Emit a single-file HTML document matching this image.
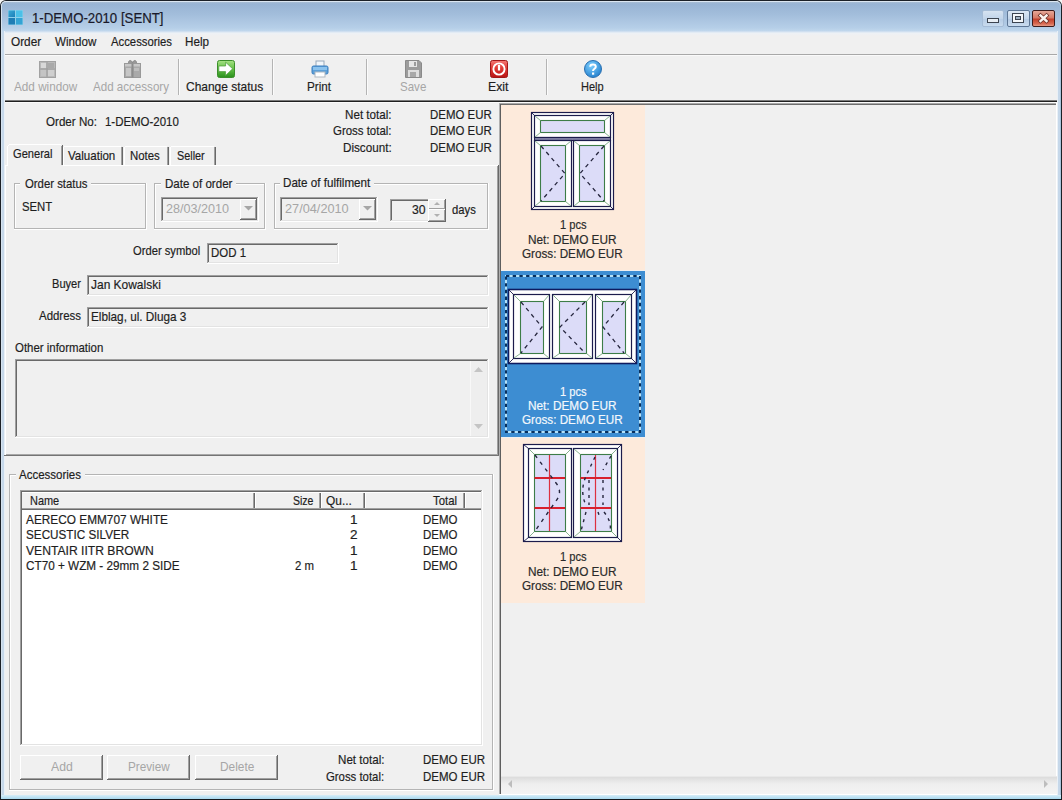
<!DOCTYPE html>
<html><head><meta charset="utf-8">
<style>
*{box-sizing:border-box}
html,body{margin:0;padding:0;width:1062px;height:800px;overflow:hidden;background:#f0f0f0}
body{position:relative;font-family:"Liberation Sans",sans-serif;font-size:12px;color:#000}
.a{position:absolute}
.t{position:absolute;white-space:pre;transform-origin:0 0;-webkit-text-stroke:0.2px currentColor}
svg{position:absolute;overflow:visible}
</style></head><body>
<div class="a" style="left:0px;top:0px;width:1062px;height:800px;background:#f6f6f6;"></div>
<div class="a" style="left:0px;top:0px;width:1062px;height:800px;background:#1b2027;border-radius:6px 6px 0 0;"></div>
<div class="a" style="left:1px;top:1px;width:1060px;height:798px;background:#c6d8ea;border-radius:5px 5px 0 0;"></div>
<div class="a" style="left:1px;top:1px;width:1060px;height:798px;border-radius:5px 5px 0 0;border-top:1px solid #dbe6f1;border-left:1px solid #d6e3ef;border-right:1px solid #aac4dc;"></div>
<div class="a" style="left:2px;top:2px;width:1058px;height:30px;background:linear-gradient(#a7bdd3 0px,#98b4d4 2px,#a2bddb 12px,#b6cfe8 26px,#c4d9ee 30px);border-radius:4px 4px 0 0;"></div>
<div class="a" style="left:1px;top:795px;width:1060px;height:4px;background:linear-gradient(#d8eef8,#a8d8ee);"></div>
<div class="a" style="left:0px;top:799px;width:1062px;height:1px;background:#15191e;"></div>
<div class="a" style="left:5px;top:31px;width:1052px;height:764px;background:#f0f0f0;"></div>
<div class="a" style="left:4px;top:31px;width:1px;height:764px;background:#eaf0f6;"></div>
<div class="a" style="left:1057px;top:31px;width:1px;height:764px;background:#eaf0f6;"></div>
<svg style="left:8px;top:10px" width="15" height="15" viewBox="0 0 15 15">
<defs><linearGradient id="ig" x1="0" y1="0" x2="1" y2="1"><stop offset="0" stop-color="#3aa9d6"/><stop offset="1" stop-color="#1d7fb8"/></linearGradient></defs>
<rect x="0" y="0" width="15" height="15" fill="#8fd0ea"/>
<rect x="0.5" y="0.5" width="6.5" height="6.5" fill="url(#ig)"/><rect x="8" y="0.5" width="6.5" height="6.5" fill="#4cc0e8"/>
<rect x="0.5" y="8" width="6.5" height="6.5" fill="#1f7db5"/><rect x="8" y="8" width="6.5" height="6.5" fill="#34a3d4"/>
</svg>
<div class="t" style="left:31.50px;top:10.95px;font-size:14px;line-height:14px;color:#1a1a2a;transform:scaleX(0.9442);">1-DEMO-2010 [SENT]</div>
<div class="a" style="left:982px;top:10px;width:22px;height:17px;border:1px solid #a5bcd6;border-radius:2px;background:linear-gradient(#d6e3f1,#c2d5ea 50%,#b5cbe4 51%,#c8dbee)"></div>
<div class="a" style="left:987px;top:18px;width:12px;height:5px;border:1px solid #3c4450;background:#e8eef4"></div>
<div class="a" style="left:1007px;top:10px;width:23px;height:17px;border:1px solid #5d7695;border-radius:2px;background:linear-gradient(#dce7f3,#c4d6ea 50%,#b3c9e2 51%,#cadcef)"></div>
<div class="a" style="left:1012px;top:13px;width:12px;height:10px;border:1px solid #3c4450;background:#f4f7fa"></div>
<div class="a" style="left:1015px;top:16px;width:6px;height:4px;border:1px solid #3c4450;background:#9fb0c2"></div>
<div class="a" style="left:1032px;top:10px;width:23px;height:17px;border:1px solid #3e1c1c;border-radius:2px;background:linear-gradient(#e6a797,#d67a66 45%,#c2412d 55%,#d96a52 85%,#e59a85)"></div>
<svg style="left:1037px;top:13px" width="13" height="12" viewBox="0 0 13 12"><path d="M3.5 2.5 L9.5 8 M9.5 2.5 L3.5 8" stroke="#6a3028" stroke-width="4" stroke-linecap="square"/><path d="M3.5 2.5 L9.5 8 M9.5 2.5 L3.5 8" stroke="#fbf3ee" stroke-width="2.4" stroke-linecap="square"/></svg>
<div class="a" style="left:5px;top:31px;width:1052px;height:23px;background:#f0f0f0;"></div>
<div class="a" style="left:5px;top:31px;width:1052px;height:1px;background:#cfdff0;"></div>
<div class="a" style="left:5px;top:32px;width:1052px;height:1px;background:#e2ebf4;"></div>
<div class="a" style="left:5px;top:33px;width:1052px;height:3px;background:linear-gradient(#edf1f6,#f0f0f0);"></div>
<div class="t" style="left:10.50px;top:34.97px;font-size:13.5px;line-height:13.5px;color:#1e1e1e;transform:scaleX(0.8750);">Order</div>
<div class="t" style="left:55.00px;top:34.97px;font-size:13.5px;line-height:13.5px;color:#1e1e1e;transform:scaleX(0.8601);">Window</div>
<div class="t" style="left:110.50px;top:34.97px;font-size:13.5px;line-height:13.5px;color:#1e1e1e;transform:scaleX(0.8381);">Accessories</div>
<div class="t" style="left:184.50px;top:34.97px;font-size:13.5px;line-height:13.5px;color:#1e1e1e;transform:scaleX(0.8644);">Help</div>
<div class="a" style="left:5px;top:54px;width:1052px;height:1px;background:#a8a8a8;"></div>
<div class="a" style="left:5px;top:55px;width:1052px;height:1px;background:#fafafa;"></div>
<div class="a" style="left:5px;top:56px;width:1052px;height:44px;background:#f0f0f0;"></div>
<div class="a" style="left:178px;top:59px;width:1px;height:36px;background:#b4b4b4;"></div>
<div class="a" style="left:179px;top:59px;width:1px;height:36px;background:#fbfbfb;"></div>
<div class="a" style="left:272px;top:59px;width:1px;height:36px;background:#b4b4b4;"></div>
<div class="a" style="left:273px;top:59px;width:1px;height:36px;background:#fbfbfb;"></div>
<div class="a" style="left:366px;top:59px;width:1px;height:36px;background:#b4b4b4;"></div>
<div class="a" style="left:367px;top:59px;width:1px;height:36px;background:#fbfbfb;"></div>
<div class="a" style="left:546px;top:59px;width:1px;height:36px;background:#b4b4b4;"></div>
<div class="a" style="left:547px;top:59px;width:1px;height:36px;background:#fbfbfb;"></div>
<div class="t" style="left:14.10px;top:79.57px;font-size:13.5px;line-height:13.5px;color:#a6a6a6;transform:scaleX(0.8695);-webkit-text-stroke:0;">Add window</div>
<div class="t" style="left:93.00px;top:79.57px;font-size:13.5px;line-height:13.5px;color:#a6a6a6;transform:scaleX(0.8583);-webkit-text-stroke:0;">Add accessory</div>
<div class="t" style="left:186.40px;top:79.57px;font-size:13.5px;line-height:13.5px;color:#1e1e1e;transform:scaleX(0.8867);">Change status</div>
<div class="t" style="left:307.00px;top:79.57px;font-size:13.5px;line-height:13.5px;color:#1e1e1e;transform:scaleX(0.8644);">Print</div>
<div class="t" style="left:399.70px;top:79.57px;font-size:13.5px;line-height:13.5px;color:#a6a6a6;transform:scaleX(0.8544);-webkit-text-stroke:0;">Save</div>
<div class="t" style="left:488.00px;top:79.57px;font-size:13.5px;line-height:13.5px;color:#1e1e1e;transform:scaleX(0.9105);">Exit</div>
<div class="t" style="left:581.40px;top:79.57px;font-size:13.5px;line-height:13.5px;color:#1e1e1e;transform:scaleX(0.8140);">Help</div>
<svg style="left:39px;top:61px" width="17" height="17" viewBox="0 0 17 17">
<rect x="0.5" y="0.5" width="16" height="16" fill="#b9b9b9" stroke="#a2a2a2"/>
<rect x="2" y="2" width="5" height="5" fill="#d8d8d8"/><rect x="9" y="9" width="6" height="6" fill="#cfcfcf"/>
<rect x="2" y="9" width="5" height="6" fill="#c4c4c4"/><rect x="9" y="2" width="6" height="5" fill="#a9a9a9"/>
<path d="M8 1 V16 M1 8 H16" stroke="#9a9a9a"/></svg>
<svg style="left:124px;top:59px" width="17" height="19" viewBox="0 0 17 19">
<path d="M4.5 4.5 C4 0.5 8 0.8 8.5 4 C9 0.8 13 0.5 12.5 4.5" fill="#9a9a9a" stroke="#8a8a8a" stroke-width="1"/>
<rect x="0.5" y="4.5" width="16" height="14" fill="#a9a9a9" stroke="#999"/>
<rect x="1" y="5" width="15" height="2.5" fill="#c8c8c8"/>
<rect x="2" y="9" width="5" height="8" fill="#c6c6c6"/><rect x="10" y="9" width="5" height="3" fill="#bdbdbd"/>
<rect x="7.5" y="4.5" width="2" height="14" fill="#8c8c8c"/></svg>
<svg style="left:217px;top:60px" width="18" height="18" viewBox="0 0 18 18">
<defs><linearGradient id="gg" x1="0" y1="0" x2="0" y2="1"><stop offset="0" stop-color="#a6e184"/><stop offset="0.5" stop-color="#62c046"/><stop offset="1" stop-color="#2a8f1c"/></linearGradient></defs>
<rect x="0.5" y="0.5" width="17" height="17" rx="2" fill="url(#gg)" stroke="#3b8f2a"/>
<path d="M1.8 6 H8.6 V2.2 L15.6 8.8 L8.6 15.4 V11.6 H1.8 Z" fill="#ffffff" stroke="#4a9a38" stroke-width="0.7"/></svg>
<svg style="left:311px;top:60px" width="18" height="18" viewBox="0 0 18 18">
<rect x="5" y="1" width="8" height="6" fill="#f2f6fa" stroke="#9ab"/>
<rect x="1" y="6" width="16" height="8" rx="1.5" fill="#5da0d8" stroke="#3d7fbf"/>
<rect x="2" y="7" width="14" height="3" fill="#8cc3ee"/>
<rect x="4" y="12" width="10" height="5" fill="#ffffff" stroke="#b0b8c0"/></svg>
<svg style="left:405px;top:60px" width="17" height="18" viewBox="0 0 17 18">
<path d="M0.5 0.5 H14 L16.5 3 V17.5 H0.5 Z" fill="#9c9c9c" stroke="#8a8a8a"/>
<rect x="4" y="1" width="8" height="6" fill="#e6e6e6"/><rect x="9" y="2" width="2" height="4" fill="#9c9c9c"/>
<rect x="3" y="10" width="11" height="7" fill="#dedede"/><rect x="5" y="12" width="6" height="5" fill="#a8a8a8"/></svg>
<svg style="left:490px;top:60px" width="18" height="18" viewBox="0 0 18 18">
<defs><linearGradient id="rg" x1="0" y1="0" x2="0" y2="1"><stop offset="0" stop-color="#f47a76"/><stop offset="0.45" stop-color="#e03a34"/><stop offset="1" stop-color="#b81414"/></linearGradient></defs>
<rect x="0.5" y="0.5" width="17" height="17" rx="2" fill="url(#rg)" stroke="#a01818"/>
<circle cx="9" cy="9" r="5.6" fill="none" stroke="#ffffff" stroke-width="1.9"/>
<rect x="7.9" y="5" width="2.2" height="5.5" fill="#ffffff"/></svg>
<svg style="left:584px;top:60px" width="18" height="18" viewBox="0 0 18 18">
<defs><radialGradient id="bg" cx="0.4" cy="0.3" r="0.8"><stop offset="0" stop-color="#7fd0ff"/><stop offset="1" stop-color="#1a78c8"/></radialGradient></defs>
<circle cx="9" cy="9" r="8.5" fill="url(#bg)" stroke="#2a6fb0"/>
<path d="M6.2 6.8 C6.2 3.6 11.8 3.6 11.8 6.8 C11.8 8.8 9 8.8 9 11" fill="none" stroke="#fff" stroke-width="2"/>
<rect x="8" y="12.5" width="2.2" height="2.2" fill="#fff"/></svg>
<div class="a" style="left:5px;top:100px;width:1052px;height:1px;background:#7a7a7a;"></div>
<div class="a" style="left:5px;top:101px;width:1052px;height:1px;background:#1f1f1f;"></div>
<div class="a" style="left:5px;top:102px;width:1052px;height:1px;background:#fbfbfb;"></div>
<div class="t" style="left:46.00px;top:115.07px;font-size:13.5px;line-height:13.5px;color:#1e1e1e;transform:scaleX(0.8603);">Order No:</div>
<div class="t" style="left:105.00px;top:115.07px;font-size:13.5px;line-height:13.5px;color:#1e1e1e;transform:scaleX(0.8478);">1-DEMO-2010</div>
<div class="t" style="left:344.60px;top:108.17px;font-size:13.5px;line-height:13.5px;color:#1e1e1e;transform:scaleX(0.8625);">Net total:</div>
<div class="t" style="left:332.70px;top:124.37px;font-size:13.5px;line-height:13.5px;color:#1e1e1e;transform:scaleX(0.8474);">Gross total:</div>
<div class="t" style="left:342.50px;top:140.97px;font-size:13.5px;line-height:13.5px;color:#1e1e1e;transform:scaleX(0.8653);">Discount:</div>
<div class="t" style="left:429.80px;top:108.17px;font-size:13.5px;line-height:13.5px;color:#1e1e1e;transform:scaleX(0.8479);">DEMO EUR</div>
<div class="t" style="left:429.80px;top:124.37px;font-size:13.5px;line-height:13.5px;color:#1e1e1e;transform:scaleX(0.8479);">DEMO EUR</div>
<div class="t" style="left:429.80px;top:140.97px;font-size:13.5px;line-height:13.5px;color:#1e1e1e;transform:scaleX(0.8479);">DEMO EUR</div>
<div class="a" style="left:5px;top:165px;width:493px;height:1px;background:#ffffff;"></div>
<div class="a" style="left:5px;top:165px;width:1px;height:290px;background:#ffffff;"></div>
<div class="a" style="left:497px;top:166px;width:1px;height:288px;background:#a0a0a0;"></div>
<div class="a" style="left:498px;top:165px;width:1px;height:291px;background:#696969;"></div>
<div class="a" style="left:6px;top:454px;width:492px;height:1px;background:#a8a8a8;"></div>
<div class="a" style="left:4px;top:455px;width:495px;height:1px;background:#747474;"></div>
<div class="a" style="left:63px;top:146px;width:60px;height:19px;background:#f0f0f0;"></div>
<div class="a" style="left:64px;top:146px;width:57px;height:1px;background:#ffffff;"></div>
<div class="a" style="left:63px;top:147px;width:1px;height:18px;background:#ffffff;"></div>
<div class="a" style="left:121px;top:147px;width:1px;height:18px;background:#a0a0a0;"></div>
<div class="a" style="left:122px;top:147px;width:1px;height:18px;background:#696969;"></div>
<div class="a" style="left:124px;top:146px;width:45px;height:19px;background:#f0f0f0;"></div>
<div class="a" style="left:125px;top:146px;width:42px;height:1px;background:#ffffff;"></div>
<div class="a" style="left:124px;top:147px;width:1px;height:18px;background:#ffffff;"></div>
<div class="a" style="left:167px;top:147px;width:1px;height:18px;background:#a0a0a0;"></div>
<div class="a" style="left:168px;top:147px;width:1px;height:18px;background:#696969;"></div>
<div class="a" style="left:170px;top:146px;width:46px;height:19px;background:#f0f0f0;"></div>
<div class="a" style="left:171px;top:146px;width:43px;height:1px;background:#ffffff;"></div>
<div class="a" style="left:170px;top:147px;width:1px;height:18px;background:#ffffff;"></div>
<div class="a" style="left:214px;top:147px;width:1px;height:18px;background:#a0a0a0;"></div>
<div class="a" style="left:215px;top:147px;width:1px;height:18px;background:#696969;"></div>
<div class="a" style="left:7px;top:144px;width:56px;height:22px;background:#f0f0f0;"></div>
<div class="a" style="left:9px;top:144px;width:52px;height:1px;background:#ffffff;"></div>
<div class="a" style="left:7px;top:146px;width:1px;height:20px;background:#ffffff;"></div>
<div class="a" style="left:8px;top:145px;width:1px;height:1px;background:#ffffff;"></div>
<div class="a" style="left:61px;top:146px;width:1px;height:19px;background:#a0a0a0;"></div>
<div class="a" style="left:62px;top:145px;width:1px;height:20px;background:#696969;"></div>
<div class="t" style="left:13.20px;top:146.97px;font-size:13.5px;line-height:13.5px;color:#1e1e1e;transform:scaleX(0.8224);">General</div>
<div class="t" style="left:67.70px;top:149.27px;font-size:13.5px;line-height:13.5px;color:#1e1e1e;transform:scaleX(0.8554);">Valuation</div>
<div class="t" style="left:129.80px;top:149.27px;font-size:13.5px;line-height:13.5px;color:#1e1e1e;transform:scaleX(0.8446);">Notes</div>
<div class="t" style="left:176.50px;top:149.27px;font-size:13.5px;line-height:13.5px;color:#1e1e1e;transform:scaleX(0.8025);">Seller</div>
<div class="a" style="left:14px;top:183px;width:132px;height:1px;background:#b4b4b4;"></div>
<div class="a" style="left:15px;top:184px;width:131px;height:1px;background:#ffffff;"></div>
<div class="a" style="left:14px;top:183px;width:1px;height:46px;background:#b4b4b4;"></div>
<div class="a" style="left:15px;top:184px;width:1px;height:45px;background:#ffffff;"></div>
<div class="a" style="left:145px;top:183px;width:1px;height:46px;background:#b4b4b4;"></div>
<div class="a" style="left:146px;top:183px;width:1px;height:47px;background:#ffffff;"></div>
<div class="a" style="left:14px;top:228px;width:132px;height:1px;background:#b4b4b4;"></div>
<div class="a" style="left:14px;top:229px;width:133px;height:1px;background:#ffffff;"></div>
<div class="a" style="left:20px;top:182px;width:71px;height:4px;background:#f0f0f0;"></div>
<div class="t" style="left:24.80px;top:176.77px;font-size:13.5px;line-height:13.5px;color:#1e1e1e;transform:scaleX(0.8414);">Order status</div>
<div class="t" style="left:21.80px;top:199.77px;font-size:13.5px;line-height:13.5px;color:#1e1e1e;transform:scaleX(0.8385);">SENT</div>
<div class="a" style="left:154px;top:183px;width:111px;height:1px;background:#b4b4b4;"></div>
<div class="a" style="left:155px;top:184px;width:110px;height:1px;background:#ffffff;"></div>
<div class="a" style="left:154px;top:183px;width:1px;height:46px;background:#b4b4b4;"></div>
<div class="a" style="left:155px;top:184px;width:1px;height:45px;background:#ffffff;"></div>
<div class="a" style="left:264px;top:183px;width:1px;height:46px;background:#b4b4b4;"></div>
<div class="a" style="left:265px;top:183px;width:1px;height:47px;background:#ffffff;"></div>
<div class="a" style="left:154px;top:228px;width:111px;height:1px;background:#b4b4b4;"></div>
<div class="a" style="left:154px;top:229px;width:112px;height:1px;background:#ffffff;"></div>
<div class="a" style="left:161px;top:182px;width:75px;height:4px;background:#f0f0f0;"></div>
<div class="t" style="left:164.60px;top:176.77px;font-size:13.5px;line-height:13.5px;color:#1e1e1e;transform:scaleX(0.8554);">Date of order</div>
<div class="a" style="left:161px;top:197px;width:98px;height:25px;background:#f0f0f0;"></div>
<div class="a" style="left:161px;top:197px;width:98px;height:1px;background:#a0a0a0;"></div>
<div class="a" style="left:161px;top:197px;width:1px;height:25px;background:#a0a0a0;"></div>
<div class="a" style="left:162px;top:198px;width:96px;height:1px;background:#696969;"></div>
<div class="a" style="left:162px;top:198px;width:1px;height:23px;background:#696969;"></div>
<div class="a" style="left:161px;top:221px;width:98px;height:1px;background:#ffffff;"></div>
<div class="a" style="left:258px;top:197px;width:1px;height:25px;background:#ffffff;"></div>
<div class="a" style="left:162px;top:220px;width:96px;height:1px;background:#e3e3e3;"></div>
<div class="a" style="left:257px;top:198px;width:1px;height:23px;background:#e3e3e3;"></div>
<div class="a" style="left:240px;top:199px;width:17px;height:21px;background:#f0f0f0;"></div>
<div class="a" style="left:240px;top:199px;width:17px;height:1px;background:#ffffff;"></div>
<div class="a" style="left:240px;top:199px;width:1px;height:21px;background:#ffffff;"></div>
<div class="a" style="left:240px;top:219px;width:17px;height:1px;background:#696969;"></div>
<div class="a" style="left:256px;top:199px;width:1px;height:21px;background:#696969;"></div>
<div class="a" style="left:241px;top:218px;width:15px;height:1px;background:#a0a0a0;"></div>
<div class="a" style="left:255px;top:200px;width:1px;height:19px;background:#a0a0a0;"></div>
<svg style="left:244px;top:206px" width="9" height="5"><path d="M0 0 H9 L4.5 4.5 Z" fill="#a6a6a6"/></svg>
<div class="t" style="left:166.00px;top:202.17px;font-size:13.5px;line-height:13.5px;color:#a6a6a6;transform:scaleX(0.9323);-webkit-text-stroke:0;">28/03/2010</div>
<div class="a" style="left:274px;top:183px;width:214px;height:1px;background:#b4b4b4;"></div>
<div class="a" style="left:275px;top:184px;width:213px;height:1px;background:#ffffff;"></div>
<div class="a" style="left:274px;top:183px;width:1px;height:46px;background:#b4b4b4;"></div>
<div class="a" style="left:275px;top:184px;width:1px;height:45px;background:#ffffff;"></div>
<div class="a" style="left:487px;top:183px;width:1px;height:46px;background:#b4b4b4;"></div>
<div class="a" style="left:488px;top:183px;width:1px;height:47px;background:#ffffff;"></div>
<div class="a" style="left:274px;top:228px;width:214px;height:1px;background:#b4b4b4;"></div>
<div class="a" style="left:274px;top:229px;width:215px;height:1px;background:#ffffff;"></div>
<div class="a" style="left:280px;top:182px;width:94px;height:4px;background:#f0f0f0;"></div>
<div class="t" style="left:283.40px;top:176.27px;font-size:13.5px;line-height:13.5px;color:#1e1e1e;transform:scaleX(0.8618);">Date of fulfilment</div>
<div class="a" style="left:280px;top:197px;width:98px;height:25px;background:#f0f0f0;"></div>
<div class="a" style="left:280px;top:197px;width:98px;height:1px;background:#a0a0a0;"></div>
<div class="a" style="left:280px;top:197px;width:1px;height:25px;background:#a0a0a0;"></div>
<div class="a" style="left:281px;top:198px;width:96px;height:1px;background:#696969;"></div>
<div class="a" style="left:281px;top:198px;width:1px;height:23px;background:#696969;"></div>
<div class="a" style="left:280px;top:221px;width:98px;height:1px;background:#ffffff;"></div>
<div class="a" style="left:377px;top:197px;width:1px;height:25px;background:#ffffff;"></div>
<div class="a" style="left:281px;top:220px;width:96px;height:1px;background:#e3e3e3;"></div>
<div class="a" style="left:376px;top:198px;width:1px;height:23px;background:#e3e3e3;"></div>
<div class="a" style="left:359px;top:199px;width:17px;height:21px;background:#f0f0f0;"></div>
<div class="a" style="left:359px;top:199px;width:17px;height:1px;background:#ffffff;"></div>
<div class="a" style="left:359px;top:199px;width:1px;height:21px;background:#ffffff;"></div>
<div class="a" style="left:359px;top:219px;width:17px;height:1px;background:#696969;"></div>
<div class="a" style="left:375px;top:199px;width:1px;height:21px;background:#696969;"></div>
<div class="a" style="left:360px;top:218px;width:15px;height:1px;background:#a0a0a0;"></div>
<div class="a" style="left:374px;top:200px;width:1px;height:19px;background:#a0a0a0;"></div>
<svg style="left:363px;top:206px" width="9" height="5"><path d="M0 0 H9 L4.5 4.5 Z" fill="#a6a6a6"/></svg>
<div class="t" style="left:284.70px;top:202.17px;font-size:13.5px;line-height:13.5px;color:#a6a6a6;transform:scaleX(0.9426);-webkit-text-stroke:0;">27/04/2010</div>
<div class="a" style="left:390px;top:199px;width:41px;height:23px;background:#f0f0f0;"></div>
<div class="a" style="left:390px;top:199px;width:41px;height:1px;background:#a0a0a0;"></div>
<div class="a" style="left:390px;top:199px;width:1px;height:23px;background:#a0a0a0;"></div>
<div class="a" style="left:391px;top:200px;width:39px;height:1px;background:#696969;"></div>
<div class="a" style="left:391px;top:200px;width:1px;height:21px;background:#696969;"></div>
<div class="a" style="left:390px;top:221px;width:41px;height:1px;background:#ffffff;"></div>
<div class="a" style="left:430px;top:199px;width:1px;height:23px;background:#ffffff;"></div>
<div class="a" style="left:391px;top:220px;width:39px;height:1px;background:#e3e3e3;"></div>
<div class="a" style="left:429px;top:200px;width:1px;height:21px;background:#e3e3e3;"></div>
<div class="a" style="left:428px;top:199px;width:18px;height:11px;background:#f0f0f0;"></div>
<div class="a" style="left:428px;top:199px;width:18px;height:1px;background:#ffffff;"></div>
<div class="a" style="left:428px;top:199px;width:1px;height:11px;background:#ffffff;"></div>
<div class="a" style="left:428px;top:209px;width:18px;height:1px;background:#696969;"></div>
<div class="a" style="left:445px;top:199px;width:1px;height:11px;background:#696969;"></div>
<div class="a" style="left:429px;top:208px;width:16px;height:1px;background:#a0a0a0;"></div>
<div class="a" style="left:444px;top:200px;width:1px;height:9px;background:#a0a0a0;"></div>
<div class="a" style="left:428px;top:209px;width:18px;height:13px;background:#f0f0f0;"></div>
<div class="a" style="left:428px;top:209px;width:18px;height:1px;background:#ffffff;"></div>
<div class="a" style="left:428px;top:209px;width:1px;height:13px;background:#ffffff;"></div>
<div class="a" style="left:428px;top:221px;width:18px;height:1px;background:#696969;"></div>
<div class="a" style="left:445px;top:209px;width:1px;height:13px;background:#696969;"></div>
<div class="a" style="left:429px;top:220px;width:16px;height:1px;background:#a0a0a0;"></div>
<div class="a" style="left:444px;top:210px;width:1px;height:11px;background:#a0a0a0;"></div>
<svg style="left:434px;top:202px" width="6" height="3"><path d="M0 3 H6 L3 0 Z" fill="#b0b0b0"/></svg>
<svg style="left:434px;top:214px" width="6" height="3"><path d="M0 0 H6 L3 3 Z" fill="#b0b0b0"/></svg>
<div class="t" style="left:411.90px;top:203.17px;font-size:13.5px;line-height:13.5px;color:#1e1e1e;transform:scaleX(0.9048);">30</div>
<div class="t" style="left:452.00px;top:203.17px;font-size:13.5px;line-height:13.5px;color:#1e1e1e;transform:scaleX(0.8342);">days</div>
<div class="t" style="left:133.40px;top:244.37px;font-size:13.5px;line-height:13.5px;color:#1e1e1e;transform:scaleX(0.8293);">Order symbol</div>
<div class="a" style="left:207px;top:243px;width:132px;height:21px;background:#f0f0f0;"></div>
<div class="a" style="left:207px;top:243px;width:132px;height:1px;background:#a0a0a0;"></div>
<div class="a" style="left:207px;top:243px;width:1px;height:21px;background:#a0a0a0;"></div>
<div class="a" style="left:208px;top:244px;width:130px;height:1px;background:#696969;"></div>
<div class="a" style="left:208px;top:244px;width:1px;height:19px;background:#696969;"></div>
<div class="a" style="left:207px;top:263px;width:132px;height:1px;background:#ffffff;"></div>
<div class="a" style="left:338px;top:243px;width:1px;height:21px;background:#ffffff;"></div>
<div class="a" style="left:208px;top:262px;width:130px;height:1px;background:#e3e3e3;"></div>
<div class="a" style="left:337px;top:244px;width:1px;height:19px;background:#e3e3e3;"></div>
<div class="t" style="left:210.50px;top:246.47px;font-size:13.5px;line-height:13.5px;color:#1e1e1e;transform:scaleX(0.8482);">DOD 1</div>
<div class="t" style="left:51.60px;top:277.37px;font-size:13.5px;line-height:13.5px;color:#1e1e1e;transform:scaleX(0.8220);">Buyer</div>
<div class="a" style="left:87px;top:275px;width:402px;height:21px;background:#f0f0f0;"></div>
<div class="a" style="left:87px;top:275px;width:402px;height:1px;background:#a0a0a0;"></div>
<div class="a" style="left:87px;top:275px;width:1px;height:21px;background:#a0a0a0;"></div>
<div class="a" style="left:88px;top:276px;width:400px;height:1px;background:#696969;"></div>
<div class="a" style="left:88px;top:276px;width:1px;height:19px;background:#696969;"></div>
<div class="a" style="left:87px;top:295px;width:402px;height:1px;background:#ffffff;"></div>
<div class="a" style="left:488px;top:275px;width:1px;height:21px;background:#ffffff;"></div>
<div class="a" style="left:88px;top:294px;width:400px;height:1px;background:#e3e3e3;"></div>
<div class="a" style="left:487px;top:276px;width:1px;height:19px;background:#e3e3e3;"></div>
<div class="t" style="left:90.50px;top:278.47px;font-size:13.5px;line-height:13.5px;color:#1e1e1e;transform:scaleX(0.8858);">Jan Kowalski</div>
<div class="t" style="left:38.60px;top:309.37px;font-size:13.5px;line-height:13.5px;color:#1e1e1e;transform:scaleX(0.8479);">Address</div>
<div class="a" style="left:87px;top:307px;width:402px;height:21px;background:#f0f0f0;"></div>
<div class="a" style="left:87px;top:307px;width:402px;height:1px;background:#a0a0a0;"></div>
<div class="a" style="left:87px;top:307px;width:1px;height:21px;background:#a0a0a0;"></div>
<div class="a" style="left:88px;top:308px;width:400px;height:1px;background:#696969;"></div>
<div class="a" style="left:88px;top:308px;width:1px;height:19px;background:#696969;"></div>
<div class="a" style="left:87px;top:327px;width:402px;height:1px;background:#ffffff;"></div>
<div class="a" style="left:488px;top:307px;width:1px;height:21px;background:#ffffff;"></div>
<div class="a" style="left:88px;top:326px;width:400px;height:1px;background:#e3e3e3;"></div>
<div class="a" style="left:487px;top:308px;width:1px;height:19px;background:#e3e3e3;"></div>
<div class="t" style="left:91.00px;top:310.47px;font-size:13.5px;line-height:13.5px;color:#1e1e1e;transform:scaleX(0.8697);">Elblag, ul. Dluga 3</div>
<div class="t" style="left:15.20px;top:341.27px;font-size:13.5px;line-height:13.5px;color:#1e1e1e;transform:scaleX(0.8466);">Other information</div>
<div class="a" style="left:15px;top:359px;width:474px;height:79px;background:#f0f0f0;"></div>
<div class="a" style="left:15px;top:359px;width:474px;height:1px;background:#a0a0a0;"></div>
<div class="a" style="left:15px;top:359px;width:1px;height:79px;background:#a0a0a0;"></div>
<div class="a" style="left:16px;top:360px;width:472px;height:1px;background:#696969;"></div>
<div class="a" style="left:16px;top:360px;width:1px;height:77px;background:#696969;"></div>
<div class="a" style="left:15px;top:437px;width:474px;height:1px;background:#ffffff;"></div>
<div class="a" style="left:488px;top:359px;width:1px;height:79px;background:#ffffff;"></div>
<div class="a" style="left:16px;top:436px;width:472px;height:1px;background:#e3e3e3;"></div>
<div class="a" style="left:487px;top:360px;width:1px;height:77px;background:#e3e3e3;"></div>
<div class="a" style="left:470px;top:361px;width:17px;height:75px;background:#eeeeee;"></div>
<div class="a" style="left:470px;top:361px;width:1px;height:75px;background:#f8f8f8;"></div>
<svg style="left:474px;top:367px" width="9" height="5"><path d="M0 5 H9 L4.5 0 Z" fill="#c4c4c4"/></svg>
<svg style="left:474px;top:424px" width="9" height="5"><path d="M0 0 H9 L4.5 5 Z" fill="#c4c4c4"/></svg>
<div class="a" style="left:9px;top:474px;width:484px;height:1px;background:#b4b4b4;"></div>
<div class="a" style="left:10px;top:475px;width:483px;height:1px;background:#ffffff;"></div>
<div class="a" style="left:9px;top:474px;width:1px;height:316px;background:#b4b4b4;"></div>
<div class="a" style="left:10px;top:475px;width:1px;height:315px;background:#ffffff;"></div>
<div class="a" style="left:492px;top:474px;width:1px;height:316px;background:#b4b4b4;"></div>
<div class="a" style="left:493px;top:474px;width:1px;height:317px;background:#ffffff;"></div>
<div class="a" style="left:9px;top:789px;width:484px;height:1px;background:#b4b4b4;"></div>
<div class="a" style="left:9px;top:790px;width:485px;height:1px;background:#ffffff;"></div>
<div class="a" style="left:16px;top:473px;width:69px;height:4px;background:#f0f0f0;"></div>
<div class="t" style="left:19.00px;top:467.77px;font-size:13.5px;line-height:13.5px;color:#1e1e1e;transform:scaleX(0.8519);">Accessories</div>
<div class="a" style="left:20px;top:490px;width:463px;height:256px;background:#ffffff;"></div>
<div class="a" style="left:20px;top:490px;width:463px;height:1px;background:#a0a0a0;"></div>
<div class="a" style="left:20px;top:490px;width:1px;height:256px;background:#a0a0a0;"></div>
<div class="a" style="left:21px;top:491px;width:461px;height:1px;background:#696969;"></div>
<div class="a" style="left:21px;top:491px;width:1px;height:254px;background:#696969;"></div>
<div class="a" style="left:20px;top:745px;width:463px;height:1px;background:#ffffff;"></div>
<div class="a" style="left:482px;top:490px;width:1px;height:256px;background:#ffffff;"></div>
<div class="a" style="left:21px;top:744px;width:461px;height:1px;background:#e3e3e3;"></div>
<div class="a" style="left:481px;top:491px;width:1px;height:254px;background:#e3e3e3;"></div>
<div class="a" style="left:22px;top:492px;width:459px;height:17px;background:#f0f0f0;"></div>
<div class="a" style="left:22px;top:492px;width:459px;height:1px;background:#ffffff;"></div>
<div class="a" style="left:22px;top:508px;width:459px;height:1px;background:#a0a0a0;"></div>
<div class="a" style="left:22px;top:509px;width:459px;height:1px;background:#6a6a6a;"></div>
<div class="a" style="left:253px;top:493px;width:1px;height:15px;background:#a0a0a0;"></div>
<div class="a" style="left:254px;top:493px;width:1px;height:15px;background:#6a6a6a;"></div>
<div class="a" style="left:255px;top:493px;width:1px;height:15px;background:#ffffff;"></div>
<div class="a" style="left:319px;top:493px;width:1px;height:15px;background:#a0a0a0;"></div>
<div class="a" style="left:320px;top:493px;width:1px;height:15px;background:#6a6a6a;"></div>
<div class="a" style="left:321px;top:493px;width:1px;height:15px;background:#ffffff;"></div>
<div class="a" style="left:363px;top:493px;width:1px;height:15px;background:#a0a0a0;"></div>
<div class="a" style="left:364px;top:493px;width:1px;height:15px;background:#6a6a6a;"></div>
<div class="a" style="left:365px;top:493px;width:1px;height:15px;background:#ffffff;"></div>
<div class="a" style="left:463px;top:493px;width:1px;height:15px;background:#a0a0a0;"></div>
<div class="a" style="left:464px;top:493px;width:1px;height:15px;background:#6a6a6a;"></div>
<div class="a" style="left:465px;top:493px;width:1px;height:15px;background:#ffffff;"></div>
<div class="t" style="left:29.60px;top:493.87px;font-size:13.5px;line-height:13.5px;color:#1e1e1e;transform:scaleX(0.8108);">Name</div>
<div class="t" style="left:292.60px;top:493.87px;font-size:13.5px;line-height:13.5px;color:#1e1e1e;transform:scaleX(0.7767);">Size</div>
<div class="t" style="left:326.20px;top:493.87px;font-size:13.5px;line-height:13.5px;color:#1e1e1e;transform:scaleX(0.8816);">Qu...</div>
<div class="t" style="left:433.40px;top:493.87px;font-size:13.5px;line-height:13.5px;color:#1e1e1e;transform:scaleX(0.8412);">Total</div>
<div class="t" style="left:26.40px;top:513.07px;font-size:13.5px;line-height:13.5px;color:#1e1e1e;transform:scaleX(0.8764);">AERECO EMM707 WHITE</div>
<div class="t" style="left:349.98px;top:513.07px;font-size:13.5px;line-height:13.5px;color:#1e1e1e;">1</div>
<div class="t" style="left:423.00px;top:513.07px;font-size:13.5px;line-height:13.5px;color:#1e1e1e;transform:scaleX(0.8494);">DEMO</div>
<div class="t" style="left:26.40px;top:528.44px;font-size:13.5px;line-height:13.5px;color:#1e1e1e;transform:scaleX(0.8678);">SECUSTIC SILVER</div>
<div class="t" style="left:349.98px;top:528.44px;font-size:13.5px;line-height:13.5px;color:#1e1e1e;">2</div>
<div class="t" style="left:423.00px;top:528.44px;font-size:13.5px;line-height:13.5px;color:#1e1e1e;transform:scaleX(0.8494);">DEMO</div>
<div class="t" style="left:26.40px;top:543.81px;font-size:13.5px;line-height:13.5px;color:#1e1e1e;transform:scaleX(0.8983);">VENTAIR IITR BROWN</div>
<div class="t" style="left:349.98px;top:543.81px;font-size:13.5px;line-height:13.5px;color:#1e1e1e;">1</div>
<div class="t" style="left:423.00px;top:543.81px;font-size:13.5px;line-height:13.5px;color:#1e1e1e;transform:scaleX(0.8494);">DEMO</div>
<div class="t" style="left:26.40px;top:559.18px;font-size:13.5px;line-height:13.5px;color:#1e1e1e;transform:scaleX(0.8695);">CT70 + WZM - 29mm 2 SIDE</div>
<div class="t" style="left:294.70px;top:559.18px;font-size:13.5px;line-height:13.5px;color:#1e1e1e;transform:scaleX(0.8439);">2 m</div>
<div class="t" style="left:349.98px;top:559.18px;font-size:13.5px;line-height:13.5px;color:#1e1e1e;">1</div>
<div class="t" style="left:423.00px;top:559.18px;font-size:13.5px;line-height:13.5px;color:#1e1e1e;transform:scaleX(0.8494);">DEMO</div>
<div class="a" style="left:20px;top:755px;width:83px;height:25px;background:#f0f0f0;"></div>
<div class="a" style="left:20px;top:755px;width:83px;height:1px;background:#ffffff;"></div>
<div class="a" style="left:20px;top:755px;width:1px;height:25px;background:#ffffff;"></div>
<div class="a" style="left:20px;top:779px;width:83px;height:1px;background:#696969;"></div>
<div class="a" style="left:102px;top:755px;width:1px;height:25px;background:#696969;"></div>
<div class="a" style="left:21px;top:778px;width:81px;height:1px;background:#a0a0a0;"></div>
<div class="a" style="left:101px;top:756px;width:1px;height:23px;background:#a0a0a0;"></div>
<div class="a" style="left:107px;top:755px;width:83px;height:25px;background:#f0f0f0;"></div>
<div class="a" style="left:107px;top:755px;width:83px;height:1px;background:#ffffff;"></div>
<div class="a" style="left:107px;top:755px;width:1px;height:25px;background:#ffffff;"></div>
<div class="a" style="left:107px;top:779px;width:83px;height:1px;background:#696969;"></div>
<div class="a" style="left:189px;top:755px;width:1px;height:25px;background:#696969;"></div>
<div class="a" style="left:108px;top:778px;width:81px;height:1px;background:#a0a0a0;"></div>
<div class="a" style="left:188px;top:756px;width:1px;height:23px;background:#a0a0a0;"></div>
<div class="a" style="left:195px;top:755px;width:83px;height:25px;background:#f0f0f0;"></div>
<div class="a" style="left:195px;top:755px;width:83px;height:1px;background:#ffffff;"></div>
<div class="a" style="left:195px;top:755px;width:1px;height:25px;background:#ffffff;"></div>
<div class="a" style="left:195px;top:779px;width:83px;height:1px;background:#696969;"></div>
<div class="a" style="left:277px;top:755px;width:1px;height:25px;background:#696969;"></div>
<div class="a" style="left:196px;top:778px;width:81px;height:1px;background:#a0a0a0;"></div>
<div class="a" style="left:276px;top:756px;width:1px;height:23px;background:#a0a0a0;"></div>
<div class="t" style="left:50.90px;top:760.17px;font-size:13.5px;line-height:13.5px;color:#a6a6a6;transform:scaleX(0.9072);-webkit-text-stroke:0;">Add</div>
<div class="t" style="left:127.80px;top:760.17px;font-size:13.5px;line-height:13.5px;color:#a6a6a6;transform:scaleX(0.8685);-webkit-text-stroke:0;">Preview</div>
<div class="t" style="left:219.60px;top:760.17px;font-size:13.5px;line-height:13.5px;color:#a6a6a6;transform:scaleX(0.8788);-webkit-text-stroke:0;">Delete</div>
<div class="t" style="left:337.70px;top:753.07px;font-size:13.5px;line-height:13.5px;color:#1e1e1e;transform:scaleX(0.8606);">Net total:</div>
<div class="t" style="left:326.10px;top:769.57px;font-size:13.5px;line-height:13.5px;color:#1e1e1e;transform:scaleX(0.8416);">Gross total:</div>
<div class="t" style="left:423.00px;top:753.07px;font-size:13.5px;line-height:13.5px;color:#1e1e1e;transform:scaleX(0.8521);">DEMO EUR</div>
<div class="t" style="left:423.00px;top:769.57px;font-size:13.5px;line-height:13.5px;color:#1e1e1e;transform:scaleX(0.8521);">DEMO EUR</div>
<div class="a" style="left:499px;top:103px;width:558px;height:692px;background:#f0f0f0;"></div>
<div class="a" style="left:499px;top:103px;width:558px;height:1px;background:#a8a8a8;"></div>
<div class="a" style="left:499px;top:103px;width:1px;height:692px;background:#b0b0b0;"></div>
<div class="a" style="left:500px;top:104px;width:557px;height:1px;background:#6e6e6e;"></div>
<div class="a" style="left:500px;top:104px;width:1px;height:690px;background:#5e5e5e;"></div>
<div class="a" style="left:1056px;top:103px;width:1px;height:692px;background:#ffffff;"></div>
<div class="a" style="left:499px;top:794px;width:558px;height:1px;background:#ffffff;"></div>
<div class="a" style="left:501px;top:105px;width:144px;height:165px;background:#fdeadb;"></div>
<div class="a" style="left:501px;top:271px;width:144px;height:166px;background:#3d8dd2;"></div>
<div class="a" style="left:501px;top:438px;width:144px;height:165px;background:#fdeadb;"></div>
<svg style="left:0;top:0" width="1062" height="800"><rect x="506" y="276" width="134" height="156" fill="none" stroke="#b4e2fa" stroke-width="2"/><rect x="506" y="276" width="134" height="156" fill="none" stroke="#08305e" stroke-width="2" stroke-dasharray="3.35 3.35"/></svg>
<div class="a" style="left:501px;top:777px;width:556px;height:17px;background:linear-gradient(#dcdcdc,#eeeeee 40%,#f3f3f3);"></div>
<div class="a" style="left:501px;top:776px;width:556px;height:1px;background:#e8e8e8;"></div>
<svg style="left:508px;top:780px" width="4" height="8"><path d="M4 0 V8 L0 4 Z" fill="#bdbdbd"/></svg>
<svg style="left:1044px;top:780px" width="4" height="8"><path d="M0 0 V8 L4 4 Z" fill="#bdbdbd"/></svg>
<svg style="left:0;top:0" width="1062" height="800"><rect x="531.5" y="112.5" width="82" height="97" fill="#ffffff" stroke="#1c1c4c" stroke-width="1.2"/><path d="M531.5 112.5 L534.5 115.5 M613.5 112.5 L610.5 115.5 M531.5 209.5 L534.5 206.5 M613.5 209.5 L610.5 206.5" stroke="#1c1c4c" stroke-width="0.9"/><rect x="534.5" y="115.5" width="76" height="22" fill="#ffffff" stroke="#1c1c4c" stroke-width="1.2"/><rect x="540.5" y="120.5" width="64" height="12" fill="#dcdcf8" stroke="#3d7d48" stroke-width="1.1"/><path d="M535 116 L540.5 120.5 M610 116 L604.5 120.5 M535 137 L540.5 132.5 M610 137 L604.5 132.5" stroke="#7aa882" stroke-width="0.9"/><rect x="534.5" y="137.5" width="76" height="3" fill="#8484a8" stroke="#1c1c4c" stroke-width="1.1"/><rect x="534.5" y="140.5" width="37" height="66" fill="#ffffff" stroke="#1c1c4c" stroke-width="1.2"/><rect x="540.5" y="145.5" width="25" height="56" fill="#dcdcf8" stroke="#3d7d48" stroke-width="1.1"/><path d="M535 141 L540.5 145.5 M571 141 L565.5 145.5 M535 206 L540.5 201.5 M571 206 L565.5 201.5" stroke="#7aa882" stroke-width="0.9"/><rect x="573.5" y="140.5" width="37" height="66" fill="#ffffff" stroke="#1c1c4c" stroke-width="1.2"/><rect x="579.5" y="145.5" width="25" height="56" fill="#dcdcf8" stroke="#3d7d48" stroke-width="1.1"/><path d="M574 141 L579.5 145.5 M610 141 L604.5 145.5 M574 206 L579.5 201.5 M610 206 L604.5 201.5" stroke="#7aa882" stroke-width="0.9"/><path d="M541 146 L565 173.5 L541 201 M604 146 L580 173.5 L604 201" fill="none" stroke="#26263e" stroke-width="1.3" stroke-dasharray="4 4"/></svg>
<svg style="left:0;top:0" width="1062" height="800"><rect x="508.5" y="289.5" width="128" height="74" fill="#ffffff" stroke="#1c1c4c" stroke-width="1.2"/><path d="M508.5 289.5 L513.5 294.5 M636.5 289.5 L631.5 294.5 M508.5 363.5 L513.5 358.5 M636.5 363.5 L631.5 358.5" stroke="#1c1c4c" stroke-width="0.9"/><rect x="508.5" y="289.5" width="128" height="74" fill="none" stroke="#0e1a60" stroke-width="1.4"/><rect x="513.5" y="294.5" width="36" height="64" fill="#ffffff" stroke="#1c1c4c" stroke-width="1.2"/><rect x="520.5" y="301.5" width="23" height="52" fill="#dcdcf8" stroke="#3d7d48" stroke-width="1.1"/><path d="M514 295 L520.5 301.5 M549 295 L543.5 301.5 M514 358 L520.5 353.5 M549 358 L543.5 353.5" stroke="#7aa882" stroke-width="0.9"/><rect x="552.5" y="294.5" width="40" height="64" fill="#ffffff" stroke="#1c1c4c" stroke-width="1.2"/><rect x="559.5" y="301.5" width="27" height="52" fill="#dcdcf8" stroke="#3d7d48" stroke-width="1.1"/><path d="M553 295 L559.5 301.5 M592 295 L586.5 301.5 M553 358 L559.5 353.5 M592 358 L586.5 353.5" stroke="#7aa882" stroke-width="0.9"/><rect x="595.5" y="294.5" width="36" height="64" fill="#ffffff" stroke="#1c1c4c" stroke-width="1.2"/><rect x="602.5" y="301.5" width="23" height="52" fill="#dcdcf8" stroke="#3d7d48" stroke-width="1.1"/><path d="M596 295 L602.5 301.5 M631 295 L625.5 301.5 M596 358 L602.5 353.5 M631 358 L625.5 353.5" stroke="#7aa882" stroke-width="0.9"/><path d="M521 302 L542 327 L521 353 M585 302 L560 327 L585 353 M624 302 L603 327 L624 353" fill="none" stroke="#26263e" stroke-width="1.3" stroke-dasharray="4 4"/></svg>
<svg style="left:0;top:0" width="1062" height="800"><rect x="523.5" y="444.5" width="98" height="97" fill="#ffffff" stroke="#1c1c4c" stroke-width="1.2"/><path d="M523.5 444.5 L528.5 448.5 M621.5 444.5 L617.5 448.5 M523.5 541.5 L528.5 537.5 M621.5 541.5 L617.5 537.5" stroke="#1c1c4c" stroke-width="0.9"/><rect x="528.5" y="448.5" width="43" height="89" fill="#ffffff" stroke="#1c1c4c" stroke-width="1.2"/><rect x="534.5" y="454.5" width="31" height="77" fill="#dcdcf8" stroke="#3d7d48" stroke-width="1.1"/><path d="M529 449 L534.5 454.5 M571 449 L565.5 454.5 M529 537 L534.5 531.5 M571 537 L565.5 531.5" stroke="#7aa882" stroke-width="0.9"/><rect x="573.5" y="448.5" width="44" height="89" fill="#ffffff" stroke="#1c1c4c" stroke-width="1.2"/><rect x="580.5" y="454.5" width="31" height="77" fill="#dcdcf8" stroke="#3d7d48" stroke-width="1.1"/><path d="M574 449 L580.5 454.5 M617 449 L611.5 454.5 M574 537 L580.5 531.5 M617 537 L611.5 531.5" stroke="#7aa882" stroke-width="0.9"/><path d="M549.5 455 V531 M595.5 455 V531" stroke="#dd3040" stroke-width="1.2"/><path d="M534.5 478 H565 M534.5 508 H565 M580.5 478 H611 M580.5 508 H611" stroke="#d8202e" stroke-width="2"/><path d="M535 455 L556 483 Q563 492 556 501 L535 531" fill="none" stroke="#26263e" stroke-width="1.4" stroke-dasharray="3.5 5"/><path d="M595 457 L586 476 Q580 490 585 503 M589 480 V505 M611 456 L603 470 M603 480 V505 M586 512 L581 531 M604 512 Q612 522 610 531 M598 512 L600 518" fill="none" stroke="#26263e" stroke-width="1.4" stroke-dasharray="3 4.5"/></svg>
<div class="t" style="left:560.00px;top:218.27px;font-size:13.5px;line-height:13.5px;color:#2a2a2a;transform:scaleX(0.8240);">1 pcs</div>
<div class="t" style="left:528.30px;top:232.67px;font-size:13.5px;line-height:13.5px;color:#2a2a2a;transform:scaleX(0.8739);">Net: DEMO EUR</div>
<div class="t" style="left:521.80px;top:246.97px;font-size:13.5px;line-height:13.5px;color:#2a2a2a;transform:scaleX(0.8661);">Gross: DEMO EUR</div>
<div class="t" style="left:560.00px;top:384.57px;font-size:13.5px;line-height:13.5px;color:#f4f8fc;transform:scaleX(0.8240);">1 pcs</div>
<div class="t" style="left:528.30px;top:398.97px;font-size:13.5px;line-height:13.5px;color:#f4f8fc;transform:scaleX(0.8739);">Net: DEMO EUR</div>
<div class="t" style="left:521.80px;top:413.27px;font-size:13.5px;line-height:13.5px;color:#f4f8fc;transform:scaleX(0.8661);">Gross: DEMO EUR</div>
<div class="t" style="left:560.00px;top:550.27px;font-size:13.5px;line-height:13.5px;color:#2a2a2a;transform:scaleX(0.8240);">1 pcs</div>
<div class="t" style="left:528.30px;top:564.67px;font-size:13.5px;line-height:13.5px;color:#2a2a2a;transform:scaleX(0.8739);">Net: DEMO EUR</div>
<div class="t" style="left:521.80px;top:578.97px;font-size:13.5px;line-height:13.5px;color:#2a2a2a;transform:scaleX(0.8661);">Gross: DEMO EUR</div>
</body></html>
